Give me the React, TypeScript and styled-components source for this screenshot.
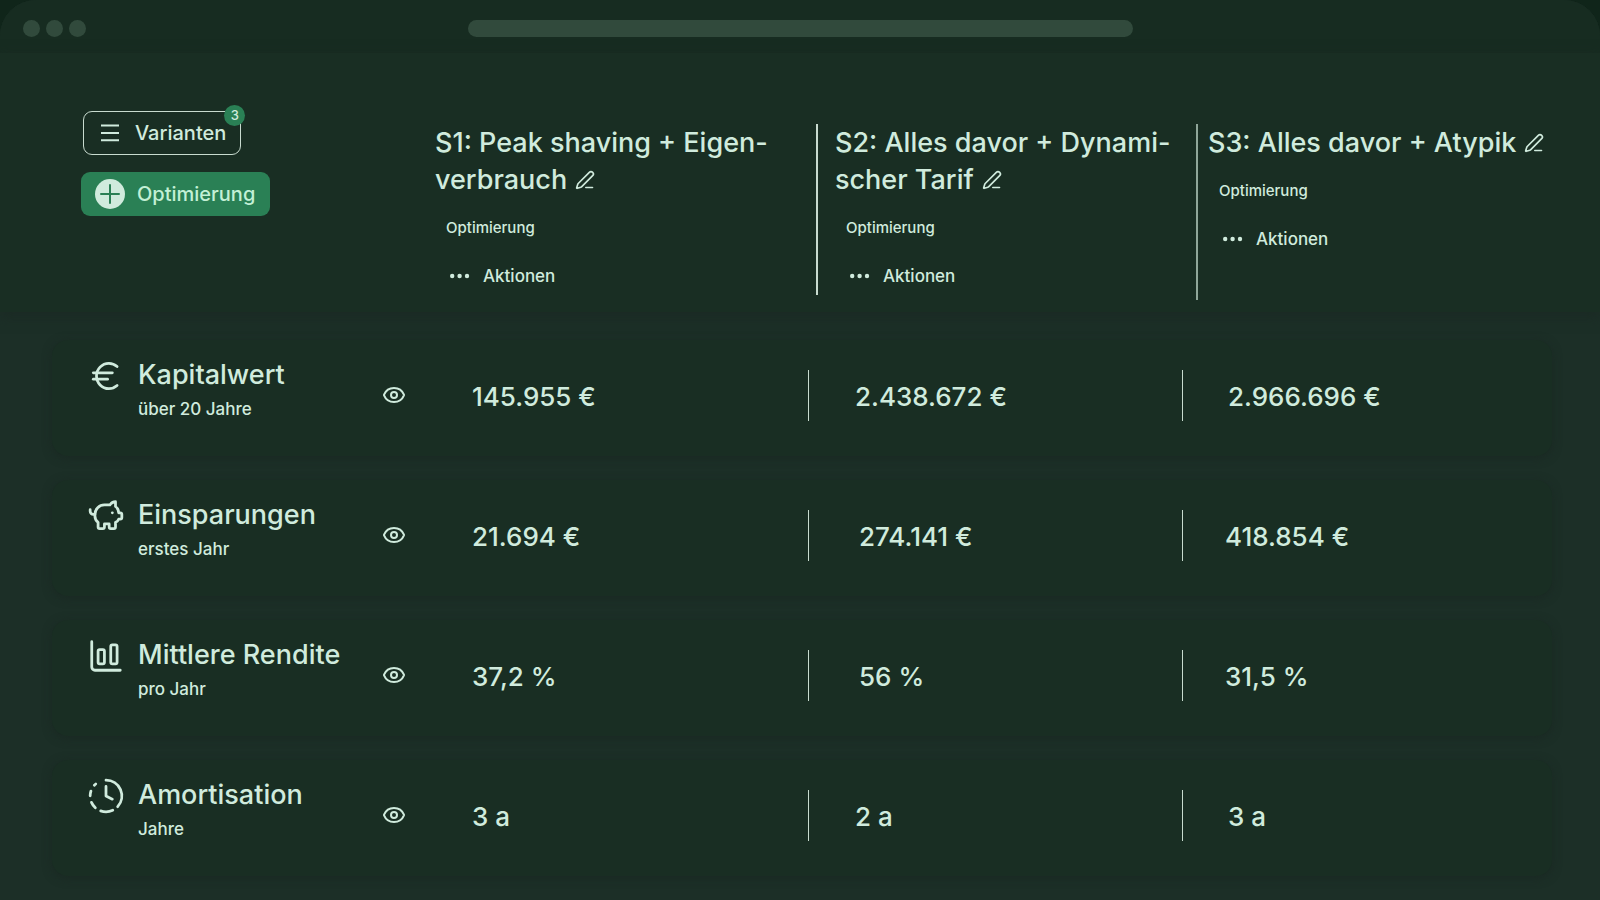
import React from 'react';
import styled, { createGlobalStyle, css } from 'styled-components';
import { ChartColumnBig, ClockFading, Euro, Eye, PenLine, PiggyBank, type LucideIcon } from 'lucide-react';

const color = {
  backdrop: '#10251a',
  bar: '#172c21',
  chrome: '#314a3c',
  head: '#192e23',
  page: '#1c2f27',
  card: '#192e23',
  text: '#d0ebdd',
  lineStrong: '#c8dbcf',
  line: '#8fa699',
  accent: '#2a8055',
  accentText: '#c3f0d5',
};

const GlobalStyle = createGlobalStyle`
  * { box-sizing: border-box; }
  body {
    margin: 0;
    background: ${color.backdrop};
    color: ${color.text};
    font-family: Inter, "Liberation Sans", sans-serif;
    font-weight: 500;
  }
  button { font: inherit; color: inherit; cursor: pointer; }
`;

const Window = styled.div`
  min-height: 100vh;
  overflow: hidden;
  border-radius: 36px 36px 0 0;
  background: ${color.page};
`;

const TitleBar = styled.header`
  display: grid;
  grid-template-columns: 1fr minmax(0, 665px) 1fr;
  align-items: center;
  height: 53px;
  padding: 3px 23px 0;
  background: ${color.bar};
`;

const Lights = styled.div`
  display: flex;
  gap: 6px;
`;

const Light = styled.span`
  width: 17px;
  height: 17px;
  border-radius: 50%;
  background: ${color.chrome};
`;

const AddressBar = styled.div`
  height: 17px;
  border-radius: 9px;
  background: ${color.chrome};
`;

const Table = styled.table`
  display: block;
`;

const Head = styled.thead`
  display: block;
  background: ${color.head};
  box-shadow: 0 4px 12px rgba(27, 41, 35, 0.9);
`;

const HeadRow = styled.tr`
  display: grid;
  grid-template-columns: 434px 382fr 380fr 404fr;
  align-items: start;
  min-height: 259px;
  padding-top: 71px;
`;

const Controls = styled.td`
  display: flex;
  flex-direction: column;
  align-items: flex-start;
  gap: 17px;
  margin-top: -13px;
  padding: 0 0 0 81px;
`;

const controlButton = css`
  position: relative;
  display: flex;
  align-items: center;
  height: 44px;
  border-radius: 9px;
  font-size: 20px;
  line-height: 24px;
`;

const VariantsButton = styled.button`
  ${controlButton}
  gap: 15px;
  margin-left: 2px;
  padding: 0 14px 0 16px;
  border: 1px solid ${color.lineStrong};
  background: transparent;
`;

const OptimizeButton = styled.button`
  ${controlButton}
  gap: 12px;
  padding: 0 15px 0 14px;
  border: 0;
  background: ${color.accent};
  color: ${color.accentText};
`;

const Badge = styled.span`
  position: absolute;
  top: -7px;
  right: -5px;
  width: 21px;
  height: 21px;
  border-radius: 50%;
  background: ${color.accent};
  font-size: 13px;
  line-height: 21px;
  text-align: center;
`;

type Rule = 'none' | 'strong' | 'soft';

const Scenario = styled.th<{ $rule: Rule }>`
  min-width: 0;
  min-height: ${(p) => (p.$rule === 'soft' ? 176 : 171)}px;
  padding: 0 0 0 ${(p) => (p.$rule === 'strong' ? 17 : p.$rule === 'soft' ? 10 : 1)}px;
  border-left: ${(p) => (p.$rule === 'none' ? 0 : 2)}px solid
    ${(p) => (p.$rule === 'strong' ? color.lineStrong : color.line)};
  font-weight: 500;
  text-align: left;
`;

const ScenarioTitle = styled.h2`
  margin: 0;
  font-size: 27px;
  font-weight: 500;
  line-height: 37px;
`;

const EditButton = styled.button`
  display: inline-flex;
  margin-left: 8px;
  padding: 0;
  border: 0;
  background: transparent;
  vertical-align: -1px;
`;

const Kind = styled.p`
  margin: 20px 0 0 11px;
  font-size: 15px;
  line-height: 20px;
`;

const ActionsButton = styled.button`
  display: flex;
  align-items: center;
  gap: 12px;
  margin: 26px 0 0 12px;
  padding: 0;
  border: 0;
  background: transparent;
  font-size: 17px;
  line-height: 24px;
`;

const Body = styled.tbody`
  display: flex;
  flex-direction: column;
  gap: 24px;
  padding: 28px 48px 24px 52px;
`;

const Card = styled.tr`
  display: grid;
  grid-template-columns: 416px 340fr 374fr 370fr;
  height: 116px;
  border-radius: 16px;
  background: ${color.card};
  box-shadow: 0 2px 10px rgba(26, 40, 34, 0.9);
`;

const Metric = styled.th`
  display: grid;
  grid-template-columns: 38px 1fr 24px;
  column-gap: 13px;
  padding: 17px 62px 0 35px;
  font-weight: 500;
  text-align: left;
`;

const MetricName = styled.span`
  display: block;
  font-size: 27px;
  line-height: 36px;
  white-space: nowrap;
`;

const MetricNote = styled.span`
  display: block;
  font-size: 17px;
  line-height: 33px;
`;

const ShowButton = styled.button`
  align-self: start;
  height: 24px;
  margin-top: 26px;
  padding: 0;
  border: 0;
  background: transparent;
`;

const Value = styled.td<{ $divided: boolean; $inset: number }>`
  height: 51px;
  margin-top: 30px;
  padding: 0 0 0 ${(p) => p.$inset}px;
  border-left: ${(p) => (p.$divided ? 1 : 0)}px solid ${color.lineStrong};
  font-size: 26px;
  line-height: 53px;
`;

const MenuGlyph = () => (
  <svg width="20" height="20" viewBox="0 0 20 20" stroke="currentColor" strokeWidth="2" aria-hidden>
    <path d="M1 2.5h18M1 10h18M1 17.2h18" />
  </svg>
);

const PlusGlyph = () => (
  <svg width="30" height="30" viewBox="0 0 30 30" aria-hidden>
    <circle cx="15" cy="15" r="15" fill={color.text} />
    <path d="M15 6v18M6 15h18" stroke={color.accent} strokeWidth="2" strokeLinecap="round" />
  </svg>
);

const DotsGlyph = () => (
  <svg width="24" height="24" viewBox="0 0 24 24" fill="currentColor" aria-hidden>
    <circle cx="5.2" cy="12" r="2.2" />
    <circle cx="12.6" cy="12" r="2.2" />
    <circle cx="20" cy="12" r="2.2" />
  </svg>
);

const scenarios: { lines: string[]; rule: Rule }[] = [
  { lines: ['S1: Peak shaving + Eigen-', 'verbrauch'], rule: 'none' },
  { lines: ['S2: Alles davor + Dynami-', 'scher Tarif'], rule: 'strong' },
  { lines: ['S3: Alles davor + Atypik'], rule: 'soft' },
];

const wideInsets = [4, 46, 45];
const narrowInsets = [4, 50, 42];

const metrics: { icon: LucideIcon; name: string; note: string; values: string[]; insets: number[] }[] = [
  { icon: Euro, name: 'Kapitalwert', note: 'über 20 Jahre', values: ['145.955 €', '2.438.672 €', '2.966.696 €'], insets: wideInsets },
  { icon: PiggyBank, name: 'Einsparungen', note: 'erstes Jahr', values: ['21.694 €', '274.141 €', '418.854 €'], insets: narrowInsets },
  { icon: ChartColumnBig, name: 'Mittlere Rendite', note: 'pro Jahr', values: ['37,2 %', '56 %', '31,5 %'], insets: narrowInsets },
  { icon: ClockFading, name: 'Amortisation', note: 'Jahre', values: ['3 a', '2 a', '3 a'], insets: wideInsets },
];

export default function App() {
  return (
    <>
      <GlobalStyle />
      <Window>
        <TitleBar>
          <Lights>
            <Light />
            <Light />
            <Light />
          </Lights>
          <AddressBar />
        </TitleBar>
        <Table>
          <Head>
            <HeadRow>
              <Controls>
                <VariantsButton type="button">
                  <MenuGlyph />
                  Varianten
                  <Badge>3</Badge>
                </VariantsButton>
                <OptimizeButton type="button">
                  <PlusGlyph />
                  Optimierung
                </OptimizeButton>
              </Controls>
              {scenarios.map(({ lines, rule }) => (
                <Scenario key={lines[0]} scope="col" $rule={rule}>
                  <ScenarioTitle>
                    {lines.map((line, i) => (
                      <React.Fragment key={line}>
                        {i > 0 && <br />}
                        {line}
                      </React.Fragment>
                    ))}
                    <EditButton type="button" aria-label="Umbenennen">
                      <PenLine size={20} strokeWidth={2} />
                    </EditButton>
                  </ScenarioTitle>
                  <Kind>Optimierung</Kind>
                  <ActionsButton type="button">
                    <DotsGlyph />
                    Aktionen
                  </ActionsButton>
                </Scenario>
              ))}
            </HeadRow>
          </Head>
          <Body>
            {metrics.map(({ icon: Icon, name, note, values, insets }) => (
              <Card key={name}>
                <Metric scope="row">
                  <Icon size={38} strokeWidth={1.75} />
                  <span>
                    <MetricName>{name}</MetricName>
                    <MetricNote>{note}</MetricNote>
                  </span>
                  <ShowButton type="button" aria-label={`${name} anzeigen`}>
                    <Eye size={24} />
                  </ShowButton>
                </Metric>
                {values.map((value, i) => (
                  <Value key={i} $divided={i > 0} $inset={insets[i]}>
                    {value}
                  </Value>
                ))}
              </Card>
            ))}
          </Body>
        </Table>
      </Window>
    </>
  );
}
